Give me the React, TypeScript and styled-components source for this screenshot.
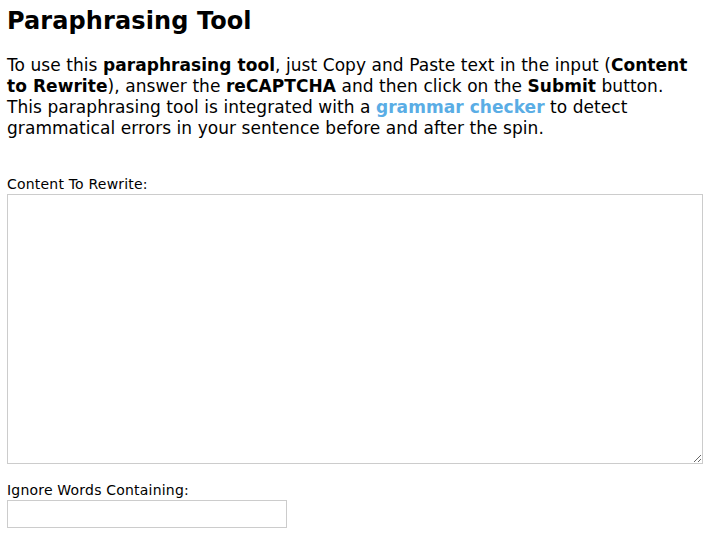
import React from "react";
import styled, { createGlobalStyle } from "styled-components";

const GlobalStyle = createGlobalStyle`
  html, body {
    margin: 0;
    padding: 0;
    background: #fff;
  }
  body {
    font-family: Verdana, "DejaVu Sans", sans-serif;
    color: #000;
  }
`;

const Page = styled.div`
  padding: 0 25px 0 7px;
  width: 696px;
`;

const Title = styled.h1`
  margin: 6px 0 0;
  font-size: 24px;
  line-height: 30px;
  font-weight: bold;
  letter-spacing: 0.1px;
`;

const Intro = styled.p`
  margin: 19px 0 0;
  font-size: 17px;
  line-height: 21px;
  letter-spacing: 0.06px;
`;

const Link = styled.a`
  color: #5aade5;
  font-weight: bold;
  text-decoration: none;
`;

const Field = styled.div<{ $top: number }>`
  margin-top: ${(p) => p.$top}px;
  display: flex;
  flex-direction: column;
  align-items: flex-start;
`;

const Label = styled.label`
  font-size: 14px;
  line-height: 17px;
  letter-spacing: 0.2px;
  margin-bottom: 1px;
`;

const Area = styled.textarea`
  box-sizing: border-box;
  width: 696px;
  height: 270px;
  border: 1px solid #ccc;
  margin: 0;
  padding: 4px;
  font-family: inherit;
  font-size: 14px;
  resize: both;
`;

const Input = styled.input`
  box-sizing: border-box;
  width: 280px;
  height: 28px;
  border: 1px solid #ccc;
  margin: 0;
  padding: 2px 4px;
  font-family: inherit;
  font-size: 14px;
`;

export default function App() {
  return (
    <Page>
      <GlobalStyle />
      <Title>Paraphrasing Tool</Title>
      <Intro>
        To use this <b>paraphrasing tool</b>, just Copy and Paste text in the input (<b>Content to Rewrite</b>),
        answer the <b>reCAPTCHA</b> and then click on the <b>Submit</b> button. This paraphrasing tool is
        integrated with a <Link href="#">grammar checker</Link> to detect grammatical errors in your sentence
        before and after the spin.
      </Intro>
      <Field $top={37}>
        <Label>Content To Rewrite:</Label>
        <Area />
      </Field>
      <Field $top={18}>
        <Label>Ignore Words Containing:</Label>
        <Input />
      </Field>
    </Page>
  );
}
